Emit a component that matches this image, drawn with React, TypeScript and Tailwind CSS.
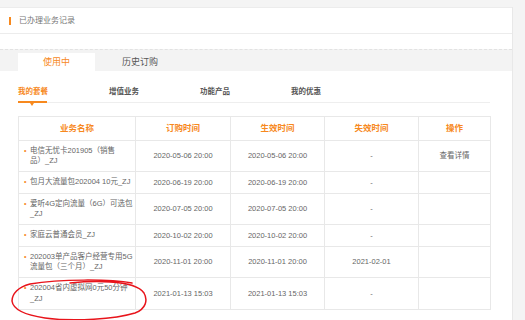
import React from "react";

const rows = [
  { name: ["电信无忧卡201905（销售", "品）_ZJ"], order: "2020-05-06 20:00", eff: "2020-05-06 20:00", exp: "-", op: "查看详情", h: "h-[31px]" },
  { name: ["包月大流量包202004 10元_ZJ"], order: "2020-06-19 20:00", eff: "2020-06-19 20:00", exp: "-", op: "", h: "h-[22px]" },
  { name: ["爱听4G定向流量（6G）可选包", "_ZJ"], order: "2020-07-05 20:00", eff: "2020-07-05 20:00", exp: "-", op: "", h: "h-[31px]" },
  { name: ["家庭云普通会员_ZJ"], order: "2020-10-02 20:00", eff: "2020-10-02 20:00", exp: "-", op: "", h: "h-[22px]" },
  { name: ["202003单产品客户经营专用5G", "流量包（三个月）_ZJ"], order: "2020-11-01 20:00", eff: "2020-11-01 20:00", exp: "2021-02-01", op: "", h: "h-[31px]" },
  { name: ["202004省内虚拟网0元50分钟", "_ZJ"], order: "2021-01-13 15:03", eff: "2021-01-13 15:03", exp: "-", op: "", h: "h-[32px]" },
];

export default function App() {
  return (
    <div
      className="relative w-[525px] h-[320px] overflow-hidden bg-[#f4f4f4] pt-[7px]"
      style={{ fontFamily: '"Liberation Sans", "Noto Sans CJK SC", sans-serif' }}
    >
      <div className="w-[513px] bg-white border-r border-[#e8e8e8] h-[313px]">
        {/* header panel */}
        <div className="h-[27px] border-t border-b border-[#ececec] flex items-center pl-[9px]">
          <div className="w-[2px] h-[8px] bg-[#f7891e] mr-[8px]" />
          <span className="text-[8px] text-[#777]">已办理业务记录</span>
        </div>
        <div className="h-[15px]" />
        {/* tab bar */}
        <div className="h-[22px] bg-[#f3f3f3] border-t border-dashed border-[#e2e2e2] flex items-end pl-[18px]">
          <div className="w-[77px] h-[18px] bg-white flex items-center justify-center pt-[2px] text-[9px] text-[#f7891e]">
            使用中
          </div>
          <div className="w-[90px] h-[18px] flex items-center justify-center pt-[2px] text-[9px] text-[#555]">
            历史订购
          </div>
        </div>
        {/* sub nav */}
        <div className="ml-[18px] w-[472px] h-[32px] border-b border-[#eeeeee] flex items-end relative">
          <div className="w-[91px] h-full relative">
            <div className="absolute left-0 top-[17px] text-[7.5px] font-bold text-[#f7891e] leading-none">我的套餐</div>
            <div className="absolute left-0 bottom-[-1px] w-[29px] h-[2px] bg-[#f7891e]" />
            <div className="absolute left-[12px] bottom-[-4px] w-0 h-0 border-l-[2.5px] border-r-[2.5px] border-t-[3px] border-l-transparent border-r-transparent border-t-[#f7891e]" />
          </div>
          <div className="w-[91px] h-full relative">
            <div className="absolute left-0 top-[17px] text-[7.5px] font-bold text-[#555] leading-none">增值业务</div>
          </div>
          <div className="w-[91px] h-full relative">
            <div className="absolute left-0 top-[17px] text-[7.5px] font-bold text-[#555] leading-none">功能产品</div>
          </div>
          <div className="w-[91px] h-full relative">
            <div className="absolute left-0 top-[17px] text-[7.5px] font-bold text-[#555] leading-none">我的优惠</div>
          </div>
        </div>
        {/* table */}
        <div className="ml-[18px] mt-[13px]">
          <table className="border-collapse table-fixed w-[472px] text-[7.5px] text-[#666]">
            <colgroup>
              <col className="w-[117px]" />
              <col className="w-[95px]" />
              <col className="w-[94px]" />
              <col className="w-[94px]" />
              <col className="w-[72px]" />
            </colgroup>
            <thead>
              <tr className="h-[24px]">
                {["业务名称", "订购时间", "生效时间", "失效时间", "操作"].map((t) => (
                  <th key={t} className="border border-[#e8e8e8] text-[#f7891e] font-bold text-[8.5px] text-center">
                    {t}
                  </th>
                ))}
              </tr>
            </thead>
            <tbody>
              {rows.map((r, i) => (
                <tr key={i} className={r.h}>
                  <td className="border border-[#e8e8e8] pl-[5px] align-middle">
                    <div className="flex leading-[10.5px]">
                      <span className="w-[6px] text-[#f7891e] text-[7px]">•</span>
                      <div>
                        {r.name.map((l, j) => (
                          <div key={j} className="whitespace-nowrap">{l}</div>
                        ))}
                      </div>
                    </div>
                  </td>
                  <td className="border border-[#e8e8e8] text-center">{r.order}</td>
                  <td className="border border-[#e8e8e8] text-center">{r.eff}</td>
                  <td className="border border-[#e8e8e8] text-center">{r.exp}</td>
                  <td className="border border-[#e8e8e8] text-center">{r.op}</td>
                </tr>
              ))}
            </tbody>
          </table>
        </div>
      </div>
      {/* red hand-drawn circle */}
      <svg className="absolute left-0 top-0 pointer-events-none" width="525" height="320" viewBox="0 0 525 320">
        <path
          d="M132 283 C110 279 60 279 30 284 C18 287 12 294 12 301 C13 309 25 315 45 318 C75 322 115 319 135 313 C146 309 148 300 144 293 C140 287 128 283 110 282 C95 281 80 282 70 283"
          fill="none"
          stroke="#e8141b"
          strokeWidth="1.5"
          strokeLinecap="round"
        />
      </svg>
    </div>
  );
}
